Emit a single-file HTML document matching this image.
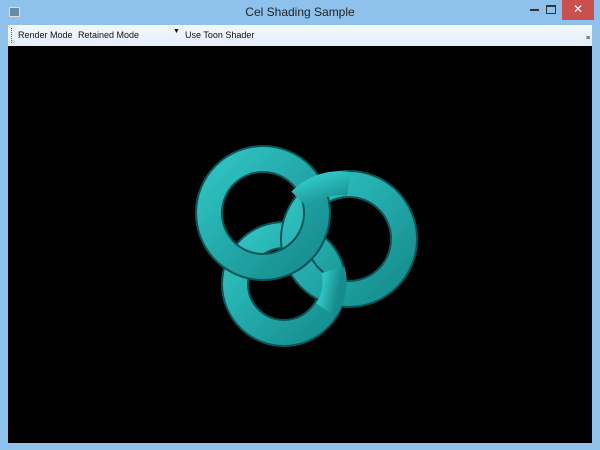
<!DOCTYPE html>
<html><head><style>
body{margin:0;width:600px;height:450px;background:#8ec2ec;position:relative;overflow:hidden;font-family:"Liberation Sans",sans-serif}
.title{position:absolute;top:5px;left:0;width:600px;text-align:center;font-size:12px;color:#222}
.close{position:absolute;left:562px;top:0;width:32px;height:20px;background:#c9504e;color:#fff;text-align:center;font-size:12px;line-height:19px}
.tb{position:absolute;left:8px;top:25px;width:584px;height:21px;background:linear-gradient(#f3f8fd,#e4eef9);font-size:9px;color:#111;white-space:nowrap}
.view{position:absolute;left:8px;top:46px;width:584px;height:397px;background:#000}
</style></head><body>
<div style="position:absolute;left:9px;top:7px;width:9px;height:8px;background:#6a8aa0;border:1px solid #ddd"></div>
<div class="title">Cel Shading Sample</div>
<div style="position:absolute;left:530px;top:9px;width:9px;height:2px;background:#333"></div>
<div style="position:absolute;left:546px;top:5px;width:8px;height:6px;border:1px solid #333;border-top-width:2px"></div>
<div class="close">✕</div>
<div class="tb">
<div style="position:absolute;left:3px;top:3px;height:15px;border-left:1px dotted #555"></div>
<span style="position:absolute;left:10px;top:5px">Render Mode</span>
<span style="position:absolute;left:70px;top:5px">Retained Mode</span>
<span style="position:absolute;left:165px;top:3px;font-size:7px">▼</span>
<span style="position:absolute;left:177px;top:5px">Use Toon Shader</span>
<span style="position:absolute;left:578px;top:10px;font-size:7px">≡</span>
</div>
<div class="view"></div>
<svg style="position:absolute;left:0;top:0" width="600" height="450">
<defs><linearGradient id="g" x1="0" y1="0" x2="1" y2="1"><stop offset="0" stop-color="#30c4c4"/><stop offset="1" stop-color="#158c8d"/></linearGradient></defs>
<g fill="none" stroke-linecap="butt">
<circle cx="284" cy="284" r="49" stroke="#0a5556" stroke-width="28"/>
<circle cx="284" cy="284" r="49" stroke="url(#g)" stroke-width="24"/>
<circle cx="349" cy="239" r="55" stroke="#0a5556" stroke-width="28"/>
<circle cx="349" cy="239" r="55" stroke="url(#g)" stroke-width="24"/>
<circle cx="263" cy="213" r="54" stroke="#0a5556" stroke-width="28"/>
<circle cx="263" cy="213" r="54" stroke="url(#g)" stroke-width="24"/>
<path d="M300 200 A55 55 0 0 1 349 184" stroke="url(#g)" stroke-width="24"/>
<path d="M333 270 A49 49 0 0 1 326 310" stroke="url(#g)" stroke-width="24"/>
</g>
</svg>
</body></html>
